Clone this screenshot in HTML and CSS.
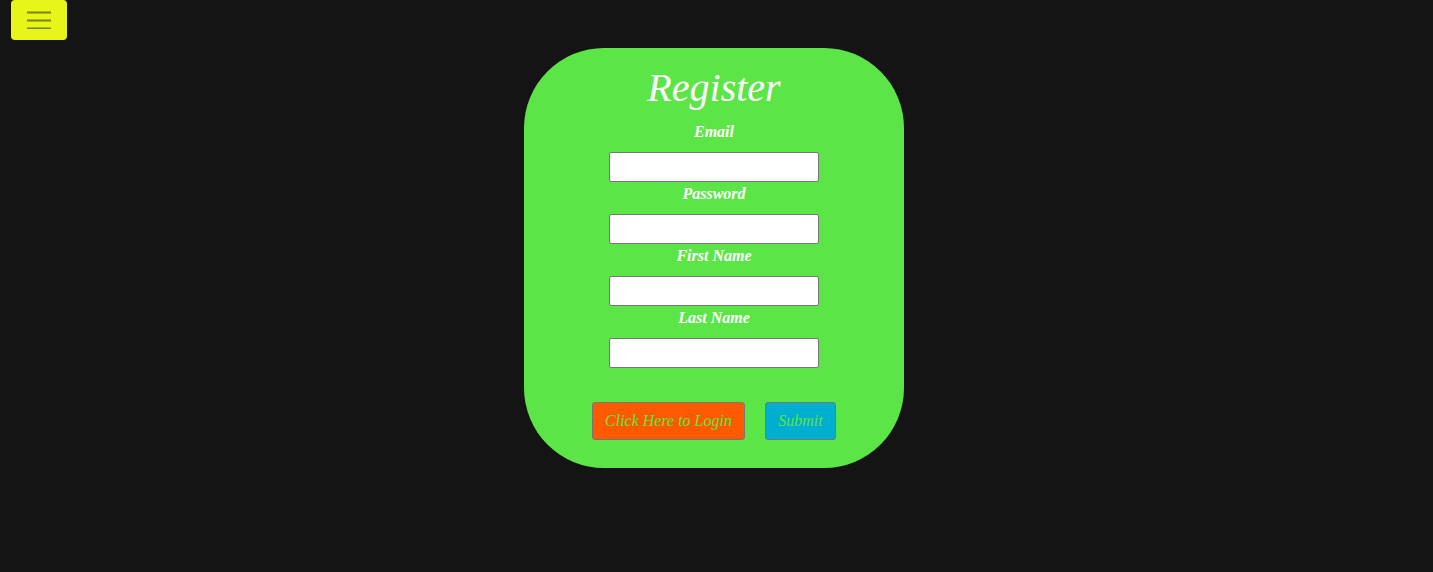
FILE: index.html
```html
<!DOCTYPE html>
<html>
<head>
<meta charset="utf-8">
<link rel="stylesheet" href="styles.css">
</head>
<body>
<header class="topbar">
  <button class="menu-btn" aria-label="menu">
    <svg width="24" height="18" viewBox="0 0 24 18"><path d="M0 1.5H24M0 9.5H24M0 17.5H24" stroke="#7d8500" stroke-width="2"/></svg>
  </button>
</header>
<main class="wrap">
  <form class="card">
    <h1 class="title">Register</h1>
    <label class="lbl">Email</label>
    <input class="field" type="text">
    <label class="lbl">Password</label>
    <input class="field" type="password">
    <label class="lbl">First Name</label>
    <input class="field" type="text">
    <label class="lbl">Last Name</label>
    <input class="field" type="text">
    <div class="actions">
      <button type="button" class="btn login">Click Here to Login</button>
      <button type="button" class="btn submit">Submit</button>
    </div>
  </form>
</main>
</body>
</html>
```
FILE: styles.css
```css
html, body {
  margin: 0;
  padding: 0;
  background: #141414;
  font-family: "Liberation Serif", "Times New Roman", serif;
}
.topbar {
  height: 40px;
  padding-left: 11px;
  display: flex;
}
.menu-btn {
  width: 56px;
  height: 40px;
  background: #e8f519;
  border: none;
  border-radius: 4px;
  display: flex;
  align-items: center;
  justify-content: center;
  padding: 0;
}
.menu-btn svg { display: block; margin-top: -1px; }
.wrap {
  display: flex;
  justify-content: center;
  padding-top: 8px;
  padding-right: 5px;
}
.card {
  width: 380px;
  height: 420px;
  box-sizing: border-box;
  background: #5ce546;
  border-radius: 80px;
  display: flex;
  flex-direction: column;
  align-items: center;
  padding-top: 17px;
}
.title {
  margin: 0;
  font-size: 40px;
  line-height: 46px;
  font-style: italic;
  font-weight: normal;
  color: #fff;
}
.lbl {
  display: block;
  color: #fff;
  font-weight: bold;
  font-style: italic;
  font-size: 16px;
  line-height: 22px;
  padding-top: 1px;
  margin-bottom: 9px;
}
.title + .lbl { margin-top: 9px; }
.field {
  width: 210px;
  height: 30px;
  box-sizing: border-box;
  margin: 0;
  border: 1px solid #767676;
  border-radius: 2px;
  background: #fff;
}
.actions {
  display: flex;
  gap: 20px;
  margin-top: 34px;
}
.btn {
  height: 38px;
  border: 1px solid #777;
  border-radius: 3px;
  font-family: "Liberation Serif", "Times New Roman", serif;
  font-style: italic;
  font-size: 16px;
  color: #5ce546;
  padding: 0 12px;
}
.login { background: #ff5a00; width: 153px; }
.submit { background: #00aed0; width: 71px; }
```
